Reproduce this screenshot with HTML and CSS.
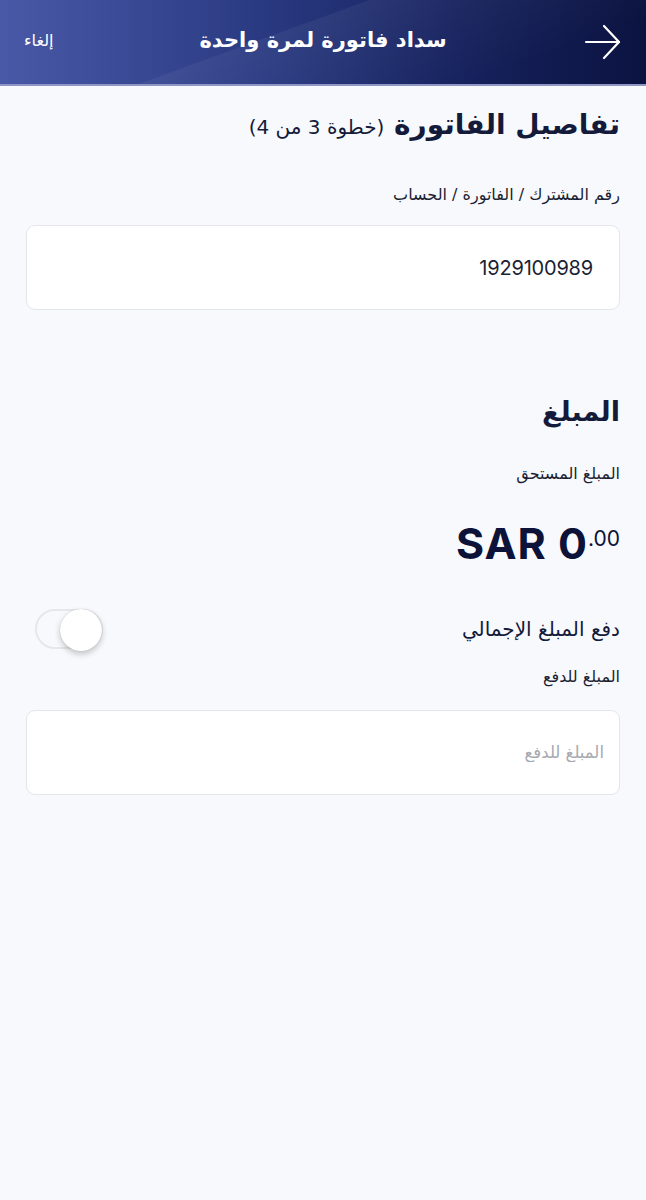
FILE: index.html
```html
<!DOCTYPE html>
<html lang="ar" dir="rtl">
<head>
    <meta charset="UTF-8">
    <meta name="viewport" content="width=device-width, initial-scale=1.0">
    <title>سداد فاتورة لمرة واحدة</title>
    <link rel="stylesheet" href="styles.css">
</head>
<body>
    <header class="top-bar">
        <button class="back-btn" aria-label="رجوع">
            <svg width="38" height="36" viewBox="0 0 38 36" fill="none" stroke="#fff" stroke-width="2.2" stroke-linecap="round" stroke-linejoin="round">
                <path d="M2 18 H35"/>
                <path d="M20 2 L35 18 L20 34"/>
            </svg>
        </button>
        <h1 class="top-title">سداد فاتورة لمرة واحدة</h1>
        <a class="cancel-link" href="#">إلغاء</a>
    </header>

    <main class="content">
        <h2 class="section-title">تفاصيل الفاتورة <span class="step">(خطوة 3 من 4)</span></h2>

        <label class="field-label" for="account_no">رقم المشترك / الفاتورة / الحساب</label>
        <div class="field-box">
            <input type="text" id="account_no" class="field-input num" value="1929100989" dir="ltr">
        </div>

        <h2 class="section-title amount-title">المبلغ</h2>
        <p class="field-label">المبلغ المستحق</p>
        <p class="amount" dir="ltr">SAR 0<sup>.00</sup></p>

        <div class="toggle-row">
            <span class="toggle-label">دفع المبلغ الإجمالي</span>
            <span class="switch"><span class="knob"></span></span>
        </div>

        <label class="field-label pay-label" for="pay_amount">المبلغ للدفع</label>
        <div class="field-box placeholder-box">
            <input type="text" id="pay_amount" class="field-input" placeholder="المبلغ للدفع">
        </div>
    </main>
</body>
</html>
```

FILE: styles.css
```css
body {
    margin: 0;
    background-color: #f8f9fd;
    font-family: "DejaVu Sans", "Noto Sans", sans-serif;
    color: #141a3a;
    min-height: 1200px;
}

.top-bar {
    height: 84px;
    display: flex;
    align-items: center;
    justify-content: space-between;
    padding: 0 24px 0 24px;
    background:
        linear-gradient(160deg, rgba(255,255,255,0) 0%, rgba(255,255,255,0) 42%, rgba(255,255,255,0.05) 42.3%, rgba(255,255,255,0) 80%),
        linear-gradient(90deg, #4a59a7 0%, #2a3a82 40%, #17235f 70%, #0b1340 100%);
    border-bottom: 2px solid #8e97c4;
    color: #fff;
}
.back-btn {
    background: none;
    border: 0;
    padding: 0;
    width: 40px;
    display: flex;
    align-items: center;
    cursor: pointer;
}
.top-title {
    margin: 0;
    font-size: 21px;
    font-weight: bold;
    padding-bottom: 4px;
}
.cancel-link {
    color: #fff;
    text-decoration: none;
    font-size: 16px;
    width: 40px;
    text-align: left;
    padding-bottom: 4px;
}

.content {
    padding: 21px 26px 0 26px;
}

.section-title {
    margin: 0;
    font-size: 28px;
    line-height: 36px;
    font-weight: bold;
    color: #141a3a;
}
.step {
    font-size: 20px;
    font-weight: normal;
}

.field-label {
    display: block;
    margin: 0;
    font-size: 16px;
    line-height: 24px;
    color: #1b1f33;
}
.section-title + .field-label {
    margin-top: 38px;
}

.field-box {
    margin-top: 18px;
    height: 83px;
    background: #fff;
    border: 1px solid #e4e6ec;
    border-radius: 9px;
    display: flex;
    align-items: center;
    padding: 0 26px;
}
.field-input {
    flex: 1;
    border: 0;
    outline: none;
    background: transparent;
    font-family: "DejaVu Sans", "Noto Sans", sans-serif;
    font-size: 16.5px;
    color: #1b1f33;
    text-align: right;
    padding: 0;
}
.field-input.num {
    font-family: "Inter", "Noto Sans", sans-serif;
    font-size: 20px;
    letter-spacing: -0.2px;
}
.placeholder-box {
    padding-right: 15px;
}
.field-input::placeholder {
    color: #a7a9b0;
}

.amount-title {
    margin-top: 84px;
    font-size: 27px;
}
.amount-title + .field-label {
    margin-top: 32px;
}
.amount {
    margin: 29px 0 0 0;
    line-height: 48px;
    text-align: right;
    font-family: "Inter", "Noto Sans", sans-serif;
    font-size: 43px;
    font-weight: 700;
    color: #0c1238;
    letter-spacing: 1px;
}
.amount sup {
    font-size: 21px;
    font-weight: 400;
    vertical-align: 13px;
    letter-spacing: 0;
}

.toggle-row {
    margin-top: 42px;
    display: flex;
    align-items: center;
    justify-content: space-between;
    padding-left: 9px;
}
.toggle-label {
    font-size: 20px;
    color: #141a3a;
}
.switch {
    position: relative;
    width: 68px;
    height: 40px;
    box-sizing: border-box;
    border: 2px solid #e6e7ea;
    border-radius: 20px;
    background: #f8f9fd;
}
.knob {
    position: absolute;
    top: -2px;
    left: 23px;
    width: 42px;
    height: 42px;
    border-radius: 50%;
    background: #fff;
    box-shadow: 0 3px 6px rgba(0, 0, 0, 0.22), 0 0 1px rgba(0, 0, 0, 0.2);
}

.pay-label {
    margin-top: 16px;
}
.pay-label + .field-box {
    margin-top: 21px;
}
```
